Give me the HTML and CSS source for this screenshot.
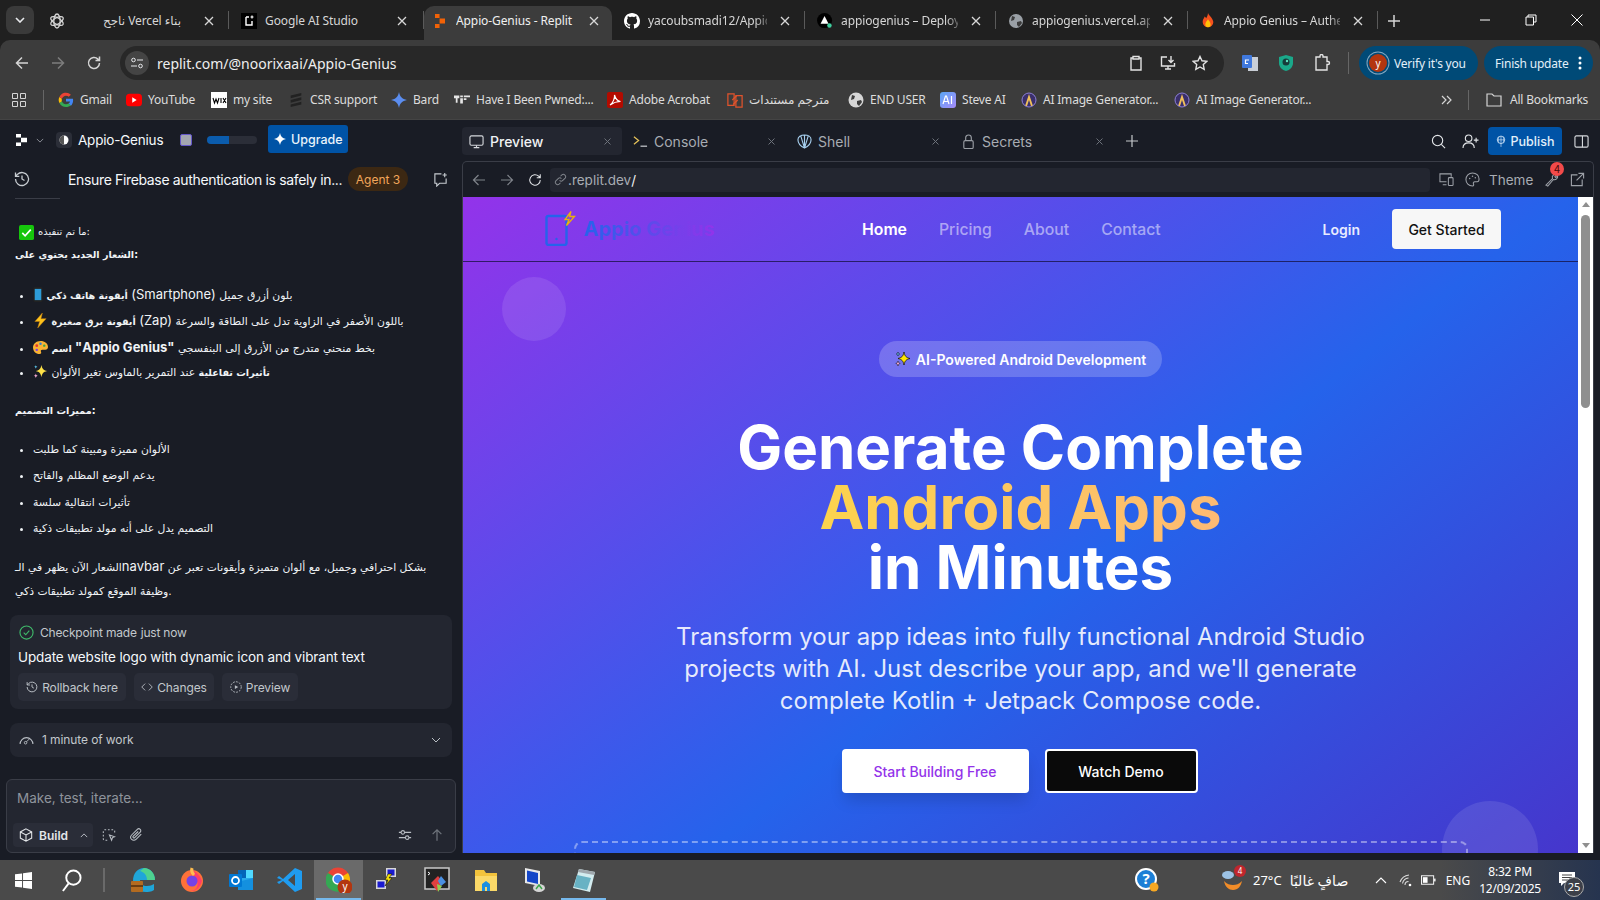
FILE: index.html
```html
<!DOCTYPE html>
<html lang="en">
<head>
<meta charset="utf-8">
<title>Appio-Genius - Replit</title>
<link rel="stylesheet" href="styles.css">
</head>
<body>
<svg class="defs" width="0" height="0" aria-hidden="true">
  <symbol id="x" viewBox="0 0 12 12"><path d="M2 2l8 8M10 2l-8 8" fill="none" stroke="currentColor" stroke-width="1.3"/></symbol>
  <symbol id="globe" viewBox="0 0 16 16"><circle cx="8" cy="8" r="7" fill="#9aa0a6"/><path d="M4 3l3 1-1 3-3 1zM9 9l4-1 1 2-3 4-2-2z" fill="#3c3c3c"/></symbol>
  <symbol id="ailogo" viewBox="0 0 16 16"><circle cx="8" cy="8" r="7" fill="#3a2f6b"/><path d="M8 2L4 14h2l2-6 2 6h2z" fill="#f0c05a"/><circle cx="8" cy="8" r="7" fill="none" stroke="#8c7fd6"/></symbol>
  <symbol id="rp" viewBox="2 1 11 14" preserveAspectRatio="none"><path d="M2 1h5v4H2zM7 5.500h6v5H7zM2 11h5v4H2z" fill="currentColor"/></symbol>
</svg>

<header class="tabstrip">
  <div class="tabcaret"><svg width="10" height="6" viewBox="0 0 10 6"><path d="M1 1l4 4 4-4" fill="none" stroke="#e8eaed" stroke-width="1.6"/></svg></div>
  <div class="tab tab-first">
    <svg class="fav" viewBox="0 0 16 16"><g fill="none" stroke="#d5d5d5" stroke-width="1.300"><ellipse cx="8" cy="8" rx="3.200" ry="7"/><ellipse cx="8" cy="8" rx="3.200" ry="7" transform="rotate(60 8 8)"/><ellipse cx="8" cy="8" rx="3.200" ry="7" transform="rotate(120 8 8)"/></g></svg>
    <span class="tabtitle rtltab">بناء Vercel ناجح</span>
    <svg class="tabx"><use href="#x"/></svg>
  </div>
  <div class="tab">
    <svg class="fav" viewBox="0 0 16 16"><rect width="16" height="16" fill="#000"/><path d="M5 4h3M5 4v8h6V8" fill="none" stroke="#fff" stroke-width="1.400"/><path d="M11 2.500v3M9.500 4h3" stroke="#fff" stroke-width="1.200"/></svg>
    <span class="tabtitle">Google AI Studio</span>
    <svg class="tabx"><use href="#x"/></svg>
  </div>
  <div class="tab tab-active">
    <svg class="fav fav-rp"><use href="#rp"/></svg>
    <span class="tabtitle">Appio-Genius - Replit</span>
    <svg class="tabx"><use href="#x"/></svg>
  </div>
  <div class="tab">
    <svg class="fav" viewBox="0 0 16 16"><path fill="#fff" d="M8 0C3.580 0 0 3.580 0 8c0 3.540 2.290 6.530 5.470 7.590.4.070.55-.17.55-.38 0-.19-.01-.82-.01-1.490-2.010.37-2.530-.49-2.690-.94-.09-.23-.48-.94-.82-1.130-.28-.15-.68-.52-.01-.53.63-.01 1.080.58 1.230.82.72 1.210 1.870.87 2.330.66.070-.52.28-.87.51-1.070-1.780-.2-3.640-.89-3.640-3.950 0-.87.31-1.590.82-2.150-.08-.2-.36-1.020.08-2.120 0 0 .67-.21 2.200.82.64-.18 1.320-.27 2-.27s1.360.09 2 .27c1.530-1.040 2.200-.82 2.200-.82.44 1.100.16 1.920.08 2.120.51.56.82 1.270.82 2.150 0 3.070-1.870 3.750-3.650 3.950.29.25.54.73.54 1.480 0 1.070-.01 1.930-.01 2.200 0 .21.15.46.55.38A8.010 8.010 0 0016 8c0-4.420-3.580-8-8-8z"/></svg>
    <span class="tabtitle tabfade">yacoubsmadi12/Appio</span>
    <svg class="tabx"><use href="#x"/></svg>
  </div>
  <div class="tab">
    <svg class="fav" viewBox="0 0 18 18"><circle cx="8.500" cy="8.500" r="8.500" fill="#000"/><path d="M8.500 3.500l4.500 8.500H4z" fill="#fff"/><circle cx="14" cy="14" r="2.500" fill="#3ecf9e"/></svg>
    <span class="tabtitle tabfade">appiogenius – Deploym</span>
    <svg class="tabx"><use href="#x"/></svg>
  </div>
  <div class="tab">
    <svg class="fav"><use href="#globe"/></svg>
    <span class="tabtitle tabfade">appiogenius.vercel.app</span>
    <svg class="tabx"><use href="#x"/></svg>
  </div>
  <div class="tab">
    <svg class="fav" viewBox="0 0 14 18"><path d="M7 0c1 3 5 5 6 10a6 6 0 01-12 0c0-3 2-4 2-6 1 1 2 1 2 2 1-2 2-4 2-6z" fill="#f4511e"/><path d="M7 7c1 2 3 3 3 6a3 3 0 01-6 0c0-3 2-4 3-6z" fill="#ffc107"/></svg>
    <span class="tabtitle tabfade">Appio Genius – Authen</span>
    <svg class="tabx"><use href="#x"/></svg>
  </div>
  <div class="tabplus"><svg width="12" height="12" viewBox="0 0 12 12"><path d="M6 0v12M0 6h12" stroke="#d5d5d5" stroke-width="1.500"/></svg></div>
  <div class="winctl">
    <svg width="12" height="12" viewBox="0 0 12 12"><path d="M1 6h10" stroke="#fff"/></svg>
    <svg width="12" height="12" viewBox="0 0 12 12"><path d="M3 3V1h8v7H8.500M1 3h7.500v8H1z" fill="none" stroke="#fff"/></svg>
    <svg width="12" height="12" viewBox="0 0 12 12"><path d="M.5.500l11 11M11.500.500l-11 11" stroke="#fff"/></svg>
  </div>
</header>

<nav class="toolbar">
  <svg class="tbicon" viewBox="0 0 16 16"><path d="M14 8H2.500M8 2.500L2.500 8 8 13.500" fill="none" stroke="#d5d5d5" stroke-width="1.500"/></svg>
  <svg class="tbicon" viewBox="0 0 16 16"><path d="M2 8h11.500M8 2.500L13.500 8 8 13.500" fill="none" stroke="#7d7d7d" stroke-width="1.500"/></svg>
  <svg class="tbicon" viewBox="0 0 16 16"><path d="M13.500 8a5.500 5.500 0 11-1.600-3.900L13.500 5.500M13.500 1.500v4h-4" fill="none" stroke="#d5d5d5" stroke-width="1.500"/></svg>
  <div class="omnibox">
    <div class="tunechip"><svg width="12" height="12" viewBox="0 0 12 12"><circle cx="2.500" cy="3" r="1.800" fill="none" stroke="#e8eaed"/><path d="M6 3h6M0 9h6" stroke="#e8eaed"/><circle cx="9.500" cy="9" r="1.800" fill="none" stroke="#e8eaed"/></svg></div>
    <span class="url">replit.com/@noorixaai/Appio-Genius</span>
    <svg class="omniicon" viewBox="0 0 16 16"><path d="M4.500 3H3v12h10V3h-1.500M5 1.500h6V4H5z" fill="none" stroke="#e3e3e3" stroke-width="1.400"/></svg>
    <svg class="omniicon" viewBox="0 0 16 16"><path d="M7 2H1.500v9h13V8M5 14h6M8 11v3M11 1v6M8.500 5l2.500 2.500L13.500 5" fill="none" stroke="#e3e3e3" stroke-width="1.400"/></svg>
    <svg class="omniicon" viewBox="0 0 16 16"><path d="M8 1.500l2 4.300 4.700.6-3.400 3.200.9 4.700L8 12l-4.200 2.300.9-4.700L1.300 6.400 6 5.800z" fill="none" stroke="#e3e3e3" stroke-width="1.400"/></svg>
  </div>
  <svg class="exticon ext-translate" viewBox="0 0 18 18"><rect x="7" y="3" width="10" height="14" fill="#c9ced6"/><rect x="1" y="1" width="10" height="13" rx="1" fill="#3f78dd"/><path d="M8 6H4.500v3.500H7" fill="none" stroke="#fff" stroke-width="1.200"/></svg>
  <svg class="exticon" viewBox="0 0 18 18"><path d="M9 1l7 2v6c0 4-3 7-7 8-4-1-7-4-7-8V3z" fill="#1aa88a"/><circle cx="9" cy="8" r="3.500" fill="#173a3a"/><circle cx="10" cy="7" r="1.200" fill="#5fe0c0"/></svg>
  <svg class="exticon" viewBox="0 0 18 18"><path d="M3 3h4v-1a1.500 1.500 0 013 0v1h4v4.500h1a1.500 1.500 0 010 3h-1V16H3z" fill="none" stroke="#e3e3e3" stroke-width="1.400"/></svg>
  <span class="tbsep"></span>
  <div class="pill pill-verify"><span class="avatar">y</span><span>Verify it's you</span></div>
  <div class="pill pill-update"><span>Finish update</span><svg width="4" height="14" viewBox="0 0 4 14"><circle cx="2" cy="2" r="1.500" fill="#fff"/><circle cx="2" cy="7" r="1.500" fill="#fff"/><circle cx="2" cy="12" r="1.500" fill="#fff"/></svg></div>
</nav>

<nav class="bookmarks">
  <svg class="bmicon" viewBox="0 0 14 14"><path d="M.5.500h5v5h-5zM8.500.500h5v5h-5zM.5 8.500h5v5h-5zM8.500 8.500h5v5h-5z" fill="none" stroke="#d5d5d5"/></svg>
  <span class="bmsep"></span>
  <div class="bm"><svg class="bmfav" viewBox="0 0 18 18"><path d="M17 9.200c0-.6 0-1.200-.2-1.700H9v3.300h4.500a3.800 3.800 0 01-1.700 2.500l2.700 2.100c1.600-1.500 2.500-3.600 2.500-6.200z" fill="#4285f4"/><path d="M9 17c2.200 0 4-.7 5.500-2l-2.700-2.100c-.7.500-1.700.8-2.800.8-2.100 0-3.900-1.400-4.600-3.400L1.600 12.500C3 15.200 5.800 17 9 17z" fill="#34a853"/><path d="M4.400 10.300a5 5 0 010-2.600L1.600 5.500a8 8 0 000 7z" fill="#fbbc05"/><path d="M9 4.200c1.200 0 2.300.4 3.100 1.200l2.400-2.400A8 8 0 001.600 5.500l2.800 2.200C5.100 5.700 6.900 4.200 9 4.200z" fill="#ea4335"/></svg><span>Gmail</span></div>
  <div class="bm"><svg class="bmfav" viewBox="0 0 18 14"><rect width="18" height="14" rx="4" fill="#f00"/><path d="M7 4l5 3-5 3z" fill="#fff"/></svg><span>YouTube</span></div>
  <div class="bm"><svg class="bmfav" viewBox="0 0 16 16"><rect width="16" height="16" fill="#fff"/><path d="M2 6l1.500 5L5 7l1.500 4L8 6M10 6v5M12 6l3 5M15 6l-3 5" fill="none" stroke="#000" stroke-width="1.100"/></svg><span>my site</span></div>
  <div class="bm"><svg class="bmfav" viewBox="0 0 16 18"><path d="M2 4l12-3v3L2 7zM2 9l12-3v3L2 12zM2 14l12-3v3L2 17z" fill="#222"/></svg><span>CSR support</span></div>
  <div class="bm"><svg class="bmfav" viewBox="0 0 16 16"><path d="M8 0c.8 4.500 3 7 8 8-5 1-7.200 3.500-8 8-.8-4.500-3-7-8-8 5-1 7.200-3.500 8-8z" fill="#5b8def"/></svg><span>Bard</span></div>
  <div class="bm"><svg class="bmfav" viewBox="0 0 18 14"><path d="M0 2h6v3H4v5H2V5H0zM7 2h3v2H7zM11 2h7v2h-7zM7 5h3v6H7zM11 5h3v2h-3z" fill="#e5e5e5"/></svg><span>Have I Been Pwned:...</span></div>
  <div class="bm"><svg class="bmfav" viewBox="0 0 16 16"><rect width="16" height="16" rx="2" fill="#b30b00"/><path d="M3 13c3-2 5-7 4.500-10 1 4 3 6 6 6.500-3 0-7 1-10.500 3.500z" fill="none" stroke="#fff" stroke-width="1.200"/></svg><span>Adobe Acrobat</span></div>
  <div class="bm"><svg class="bmfav" viewBox="0 0 18 18"><path d="M1 2h7v13H1zM10 4h7v13h-7z" fill="none" stroke="#e0532c" stroke-width="1.400"/><path d="M6 9l5-5M7 14l5-5" stroke="#e0532c" stroke-width="1.400"/></svg><span class="arabicbm">مترجم مستندات</span></div>
  <div class="bm"><svg class="bmfav bmfav-globe" viewBox="0 0 16 16"><circle cx="8" cy="8" r="7.500" fill="#d5d5d5"/><path d="M4 3l3 1-1 3-3 1zM9 9l4-1 1 2-3 4-2-2z" fill="#3c3c3c"/></svg><span>END USER</span></div>
  <div class="bm"><svg class="bmfav" viewBox="0 0 16 16"><defs><linearGradient id="stv" x1="0" y1="0" x2="1" y2="1"><stop offset="0" stop-color="#5aa5f5"/><stop offset="1" stop-color="#a78bfa"/></linearGradient></defs><rect width="16" height="16" rx="3" fill="url(#stv)"/><path d="M3 12l2.500-8h1L9 12M4 9.500h4M11.500 4v8" fill="none" stroke="#fff" stroke-width="1.200"/></svg><span>Steve AI</span></div>
  <div class="bm"><svg class="bmfav"><use href="#ailogo"/></svg><span>AI Image Generator...</span></div>
  <div class="bm"><svg class="bmfav"><use href="#ailogo"/></svg><span>AI Image Generator...</span></div>
  <svg class="bmicon bm-more" viewBox="0 0 12 12"><path d="M2 2l4 4-4 4M7 2l4 4-4 4" fill="none" stroke="#d5d5d5" stroke-width="1.200"/></svg>
  <span class="bmsep"></span>
  <div class="bm bm-all"><svg class="bmfav" viewBox="0 0 16 14"><path d="M1 1h5l2 2h7v10H1z" fill="none" stroke="#d5d5d5" stroke-width="1.200"/></svg><span>All Bookmarks</span></div>
</nav>

<main class="workspace">
  <aside class="left">
    <div class="lhead">
      <svg class="rp-mark"><use href="#rp"/></svg>
      <svg class="chev" viewBox="0 0 10 6"><path d="M1 1l4 4 4-4" fill="none" stroke="#8b8f98" stroke-width="1.200"/></svg>
      <span class="projicon"><svg width="10" height="10" viewBox="0 0 10 10"><circle cx="5" cy="5" r="4.500" fill="#fff"/><path d="M5 .5a4.500 4.500 0 000 9z" fill="#555"/></svg></span>
      <span class="projname">Appio-Genius</span>
      <span class="stopbox"></span>
      <span class="progress"><span class="progress-fill"></span></span>
      <button class="upgrade"><svg width="12" height="12" viewBox="0 0 16 16"><path d="M8 0c.8 4.500 3 7 8 8-5 1-7.200 3.500-8 8-.8-4.500-3-7-8-8 5-1 7.200-3.500 8-8z" fill="#fff"/></svg>Upgrade</button>
    </div>
    <div class="lsub">
      <svg class="lsub-hist" viewBox="0 0 16 16"><path d="M1.500 8a6.500 6.500 0 101.900-4.600L1.500 5.300M1.500 1.500v3.800h3.800M8 4.500V8l2.500 1.500" fill="none" stroke="#c7ccd1" stroke-width="1.300"/></svg>
      <span class="lsub-title">Ensure Firebase authentication is safely in...</span>
      <span class="agent">Agent 3</span>
      <svg class="lsub-new" viewBox="0 0 16 16"><path d="M9 2H2v10h2v3l3-3h7V7M12.500 1v4.500M10.200 3.200h4.500" fill="none" stroke="#c7ccd1" stroke-width="1.200"/></svg>
    </div>
    <div class="messages">
      <div class="scrollfade"></div>
      <p class="msg msg-small"><svg class="emoji" viewBox="0 0 16 16"><rect width="16" height="16" rx="2" fill="#16c60c"/><path d="M3.500 8.500l3 3 6-6.500" fill="none" stroke="#fff" stroke-width="1.800"/></svg> ما تم تنفيذه:</p>
      <p class="msg msg-second"><b>الشعار الجديد يحتوي على:</b></p>
      <ul class="list">
        <li><svg class="emoji emoji-phone" viewBox="3 0 10 16"><rect x="3" width="10" height="16" rx="1.500" fill="#222"/><rect x="4.500" y="2" width="7" height="12" fill="#2d9bd8"/></svg> <b>أيقونة هاتف ذكي</b> <span class="en">(Smartphone)</span> بلون أزرق جميل</li>
        <li><svg class="emoji" viewBox="0 0 16 16"><path d="M10 0L2 9h5l-2 7 9-10H8.500z" fill="#fcc21b" stroke="#c77c10" stroke-width=".5"/></svg> <b>أيقونة برق صغيرة</b> <span class="en">(Zap)</span> باللون الأصفر في الزاوية تدل على الطاقة والسرعة</li>
        <li><svg class="emoji" viewBox="0 0 16 16"><path d="M8 1C3.500 1 0 4 0 8s3 7 7 7c2 0 2-1.500 1.500-2.500s0-2 1.500-2h3c2 0 3-1.500 3-3C16 3.500 12.500 1 8 1z" fill="#f9b233"/><circle cx="4" cy="6" r="1.500" fill="#e5392d"/><circle cx="8" cy="4" r="1.300" fill="#2d7ddb"/><circle cx="12" cy="6" r="1.300" fill="#3aa648"/><circle cx="4" cy="10.500" r="1.300" fill="#7c3aed"/></svg> <b>اسم <span class="en">"Appio Genius"</span></b> بخط منحني متدرج من الأزرق إلى البنفسجي</li>
        <li><svg class="emoji" viewBox="0 0 16 16"><path d="M9 1c.8 4 2 5.500 6 6.500-4 1-5.200 2.500-6 6.500-.8-4-2-5.500-6-6.500 4-1 5.200-2.500 6-6.500z" fill="#fde047"/><path d="M3 10c.3 1.500.8 2 2.200 2.400C3.800 12.800 3.300 13.500 3 15c-.3-1.500-.8-2.200-2.200-2.600C2.200 12 2.700 11.500 3 10z" fill="#f0a8d0"/><path d="M3 1c.2 1.200.6 1.600 1.800 2C3.600 3.400 3.200 3.800 3 5c-.2-1.200-.6-1.600-1.800-2C2.400 2.600 2.800 2.200 3 1z" fill="#5cc4e8"/></svg> <b>تأثيرات تفاعلية</b> عند التمرير بالماوس تغير الألوان</li>
      </ul>
      <p class="msg msg-head"><b>مميزات التصميم:</b></p>
      <ul class="list list-second">
        <li>الألوان مميزة ومبينة كما طلبت</li>
        <li>يدعم الوضع المظلم والفاتح</li>
        <li>تأثيرات انتقالية سلسة</li>
        <li>التصميم يدل على أنه مولد تطبيقات ذكية</li>
      </ul>
      <p class="msg msg-para">الشعار الآن يظهر في الـ<span class="en">navbar</span> بشكل احترافي وجميل، مع ألوان متميزة وأيقونات تعبر عن وظيفة الموقع كمولد تطبيقات ذكي.</p>
    </div>
    <section class="card checkpoint">
      <div class="cp-top"><svg class="cp-check" viewBox="0 0 16 16"><circle cx="8" cy="8" r="7" fill="none" stroke="#3fb96a" stroke-width="1.200"/><path d="M5 8.200l2.200 2.200L11 6" fill="none" stroke="#3fb96a" stroke-width="1.200"/></svg><span>Checkpoint made</span><span class="cp-now">just now</span></div>
      <div class="cp-title">Update website logo with dynamic icon and vibrant text</div>
      <div class="cp-actions">
        <button class="cp-btn cp-roll"><svg viewBox="0 0 16 16"><path d="M1.500 8a6.500 6.500 0 101.900-4.600L1.500 5.300M1.500 1.500v3.800h3.800M8 4.500V8l2.500 1.500" fill="none" stroke="#b9bec4" stroke-width="1.300"/></svg>Rollback here</button>
        <button class="cp-btn cp-chg"><svg viewBox="0 0 16 16"><path d="M5.500 3.500L1 8l4.500 4.500M10.500 3.500L15 8l-4.500 4.500" fill="none" stroke="#b9bec4" stroke-width="1.200"/></svg>Changes</button>
        <button class="cp-btn cp-prev"><svg viewBox="0 0 16 16"><circle cx="8" cy="8" r="7" fill="none" stroke="#b9bec4" stroke-width="1.200" stroke-dasharray="2.500 1.500"/><path d="M6.500 5.500L11 8l-4.500 2.500z" fill="#b9bec4"/></svg>Preview</button>
      </div>
    </section>
    <section class="card work">
      <svg class="work-gauge" viewBox="0 0 16 12"><path d="M1 11a7 7 0 0114 0" fill="none" stroke="#b9bec4" stroke-width="1.200"/><circle cx="7" cy="9.500" r="1.400" fill="none" stroke="#b9bec4"/><path d="M8 8.500l3-3" stroke="#b9bec4"/></svg>
      <span class="work-text">1 minute of work</span>
      <svg class="work-chev" viewBox="0 0 10 6"><path d="M1 1l4 4 4-4" fill="none" stroke="#b9bec4" stroke-width="1"/></svg>
    </section>
    <section class="composer">
      <div class="placeholder">Make, test, iterate...</div>
      <div class="comp-row">
        <div class="build"><svg viewBox="0 0 16 16"><path d="M8 1l6.500 3.500v7L8 15l-6.500-3.500v-7zM1.500 4.500L8 8l6.500-3.500M8 8v7" fill="none" stroke="#e3e6e9" stroke-width="1.200"/></svg><span>Build</span><svg class="build-chev" viewBox="0 0 10 6"><path d="M1 5l4-4 4 4" fill="none" stroke="#b9bec4" stroke-width="1.200"/></svg></div>
        <svg class="comp-icon comp-select" viewBox="0 0 16 16"><path d="M6 14H3a1.500 1.500 0 01-1.500-1.500v-9A1.500 1.500 0 013 2h10a1.500 1.500 0 011.500 1.500V7" fill="none" stroke="#b9bec4" stroke-width="1.200" stroke-dasharray="2 2"/><path d="M8.500 8l6 2-2.500 1-1 3z" fill="none" stroke="#b9bec4" stroke-width="1.200"/></svg>
        <svg class="comp-icon comp-clip" viewBox="0 0 16 16"><path d="M14 7l-6 6a3.500 3.500 0 01-5-5l6.500-6.500a2.300 2.300 0 013.300 3.300L6.500 11a1.100 1.100 0 01-1.600-1.600L10.500 4" fill="none" stroke="#b9bec4" stroke-width="1.200"/></svg>
        <svg class="comp-icon comp-sliders" viewBox="0 0 16 16"><path d="M1 5h2.500M8 5h7M1 11h7M12.500 11H15" stroke="#b9bec4" stroke-width="1.200"/><circle cx="5.500" cy="5" r="2" fill="none" stroke="#b9bec4" stroke-width="1.200"/><circle cx="10.500" cy="11" r="2" fill="none" stroke="#b9bec4" stroke-width="1.200"/></svg>
        <svg class="comp-icon comp-send" viewBox="0 0 16 16"><path d="M8 14.500V2M3 7l5-5 5 5" fill="none" stroke="#6f747c" stroke-width="1.400"/></svg>
      </div>
    </section>
  </aside>

  <section class="right">
    <div class="rtabs">
      <div class="rtab rtab-active"><svg viewBox="0 0 16 16"><rect x="1" y="2" width="14" height="10" rx="1.500" fill="none" stroke="#d5d8dc" stroke-width="1.200"/><path d="M5 14.500h6M8 12v2.500" stroke="#d5d8dc" stroke-width="1.200"/></svg><span>Preview</span><svg class="rtabx"><use href="#x"/></svg></div>
      <div class="rtab"><svg viewBox="0 0 16 16"><path d="M1 3l5 4-5 4" fill="none" stroke="#e6c35a" stroke-width="1.300"/><path d="M8 13h7" stroke="#c9ccd1" stroke-width="1.300"/></svg><span>Console</span><svg class="rtabx"><use href="#x"/></svg></div>
      <div class="rtab"><svg viewBox="0 0 16 16"><path d="M8 15C4 13 1 10 1 6c0-3 3-5 7-5s7 2 7 5c0 4-3 7-7 9zM8 15V1M8 15L4 2M8 15l4-13" fill="none" stroke="#a7cfee" stroke-width="1.200"/></svg><span>Shell</span><svg class="rtabx"><use href="#x"/></svg></div>
      <div class="rtab"><svg viewBox="0 0 16 16"><rect x="3" y="7" width="10" height="8.500" rx="1.500" fill="none" stroke="#9a9ea5" stroke-width="1.200"/><path d="M5 7V4a3 3 0 016 0v3" fill="none" stroke="#9a9ea5" stroke-width="1.200"/></svg><span>Secrets</span><svg class="rtabx"><use href="#x"/></svg></div>
      <svg class="rplus" viewBox="0 0 12 12"><path d="M6 0v12M0 6h12" stroke="#c5c8cc" stroke-width="1.200"/></svg>
      <svg class="ricon r-search" viewBox="0 0 16 16"><circle cx="7" cy="7" r="5.500" fill="none" stroke="#e3e6e9" stroke-width="1.200"/><path d="M11 11l4 4" stroke="#e3e6e9" stroke-width="1.200"/></svg>
      <svg class="ricon r-add" viewBox="0 0 18 16"><circle cx="7" cy="4.500" r="3.500" fill="none" stroke="#e3e6e9" stroke-width="1.200"/><path d="M1 15c0-3.500 2.500-5.500 6-5.500s6 2 6 5.500M15 4v5M12.500 6.500h5" fill="none" stroke="#e3e6e9" stroke-width="1.200"/></svg>
      <button class="publish"><svg viewBox="0 0 12 14"><circle cx="6" cy="5" r="4.500" fill="none" stroke="#cfe3f7"/><path d="M6 .5v13M1.500 5h9M3.500 1.500c-1 2-1 5 0 7M8.500 1.500c1 2 1 5 0 7" fill="none" stroke="#cfe3f7" stroke-width=".8"/></svg>Publish</button>
      <svg class="ricon r-split" viewBox="0 0 16 16"><rect x="1" y="2" width="14" height="12" rx="1.500" fill="none" stroke="#d5d8dc" stroke-width="1.200"/><path d="M9 2v12" stroke="#d5d8dc" stroke-width="1.200"/></svg>
    </div>
    <div class="frame">
      <div class="framebar">
        <svg class="fb-icon" viewBox="0 0 14 14"><path d="M13 7H1.500M6.500 2L1.500 7l5 5" fill="none" stroke="#7f838a" stroke-width="1.200"/></svg>
        <svg class="fb-icon" viewBox="0 0 14 14"><path d="M1 7h11.500M7.500 2l5 5-5 5" fill="none" stroke="#7f838a" stroke-width="1.200"/></svg>
        <svg class="fb-icon" viewBox="0 0 16 16"><path d="M14 8a6 6 0 11-1.800-4.300L14 5.500M14 1.500v4h-4" fill="none" stroke="#e3e6e9" stroke-width="1.200"/></svg>
        <div class="fb-url"><svg viewBox="0 0 14 14"><path d="M6 8a2.500 2.500 0 003.500 0l2.500-2.500A2.500 2.500 0 008.500 2L7 3.500M8 6a2.500 2.500 0 00-3.500 0L2 8.500A2.500 2.500 0 005.500 12L7 10.500" fill="none" stroke="#7f838a" stroke-width="1.100"/></svg><span class="fb-host">.replit.dev</span><span>/</span></div>
        <svg class="fb-tool fb-devices" viewBox="0 0 16 16"><path d="M8 10.500H1V2h12v3M4 13.500h4" fill="none" stroke="#9da1a8" stroke-width="1.100"/><rect x="10" y="6" width="5" height="8.500" rx="1" fill="none" stroke="#9da1a8" stroke-width="1.100"/></svg>
        <svg class="fb-tool fb-palette" viewBox="0 0 16 16"><path d="M8 1C4 1 1 4 1 8s3 7 7 7c1.500 0 1.500-1.500 1-2.500s0-2 1.500-2H13c1.500 0 2-1.500 2-3C15 3.500 12 1 8 1z" fill="none" stroke="#9da1a8" stroke-width="1.100"/><circle cx="5" cy="7" r=".8" fill="#9da1a8"/><circle cx="8" cy="4.500" r=".8" fill="#9da1a8"/><circle cx="11" cy="6" r=".8" fill="#9da1a8"/></svg>
        <span class="fb-theme">Theme</span>
        <span class="fb-wrench"><svg viewBox="0 0 16 16"><path d="M1 14l7-7a3.500 3.500 0 014.500-4.500L10.500 5l1 1 2-2A3.500 3.500 0 019 8l-6 7z" fill="none" stroke="#9da1a8" stroke-width="1.100"/></svg><span class="fb-badge">4</span></span>
        <svg class="fb-tool fb-open" viewBox="0 0 16 16"><path d="M8 3H1.500v11.500H13V8M9 1.500h5.500V7M14.500 1.500L7 9" fill="none" stroke="#9da1a8" stroke-width="1.200"/></svg>
      </div>
      <div class="viewport">
        <div class="page">
          <span class="blob blob-a"></span>
          <span class="blob blob-b"></span>
          <div class="sitenav">
            <div class="sitelogo">
              <svg class="logoicon" viewBox="0 0 32 36"><rect x="1.500" y="6" width="20" height="29" rx="2" fill="none" stroke="#2563eb" stroke-width="2.400"/><circle cx="11.500" cy="29" r="1.200" fill="#2563eb"/><path d="M26 1.500l-6 8h4l-2.500 6 8-9h-5z" fill="none" stroke="#eab308" stroke-width="1.300"/></svg>
              <span class="logotext">Appio Genius</span>
            </div>
            <div class="sitelinks">
              <a class="link-on">Home</a><a>Pricing</a><a>About</a><a>Contact</a>
            </div>
            <div class="siteauth"><a class="login">Login</a><button class="getstarted">Get Started</button></div>
          </div>
          <div class="hero">
            <div class="badge"><svg class="badge-star" viewBox="0 0 16 16"><path d="M9 1c.8 4 2 5.500 6 6.500-4 1-5.200 2.500-6 6.500-.8-4-2-5.500-6-6.500 4-1 5.200-2.500 6-6.500z" fill="#ffe600" stroke="#111" stroke-width=".8"/><path d="M3 10c.3 1.500.8 2 2.200 2.400C3.800 12.800 3.300 13.500 3 15c-.3-1.500-.8-2.200-2.200-2.600C2.200 12 2.700 11.500 3 10z" fill="#f0a8d0" stroke="#111" stroke-width=".5"/><path d="M3 1c.2 1.200.6 1.600 1.800 2C3.600 3.400 3.200 3.800 3 5c-.2-1.200-.6-1.600-1.800-2C2.400 2.600 2.800 2.200 3 1z" fill="#5cc4e8" stroke="#111" stroke-width=".5"/></svg><span>AI-Powered Android Development</span></div>
            <h1 class="headline"><span class="hl-line">Generate Complete</span><span class="hl-line headline-accent">Android Apps</span><span class="hl-line">in Minutes</span></h1>
            <p class="subtitle">Transform your app ideas into fully functional Android Studio projects with AI. Just describe your app, and we'll generate complete Kotlin + Jetpack Compose code.</p>
            <div class="cta"><button class="cta-start">Start Building Free</button><button class="cta-demo">Watch Demo</button></div>
            <div class="dashed"></div>
          </div>
        </div>
        <div class="scrollbar"><span class="sb-up"></span><span class="sb-thumb"></span><span class="sb-down"></span></div>
      </div>
    </div>
  </section>
</main>

<footer class="taskbar">
  <svg class="tk-win" viewBox="0 0 18 18"><path d="M0 2.500l7.500-1v7H0zM8.500 1.300L18 0v8.500H8.500zM0 9.500h7.500v7l-7.500-1zM8.500 9.500H18V18l-9.500-1.300z" fill="#fff"/></svg>
  <svg class="tk-search" viewBox="0 0 22 24"><circle cx="13" cy="9" r="7.500" fill="none" stroke="#fff" stroke-width="2"/><path d="M8 15l-6 8" stroke="#fff" stroke-width="2"/></svg>
  <span class="tk-sep"></span>
  <div class="tk-apps">
    <span class="tk-app"><svg viewBox="0 0 26 26"><path d="M3 14C3 6 8 1 14 1c6 0 11 5 11 12H10c0 4 3 6 7 6 3 0 5-1 7-2v6c-3 2-6 2-8 2C8 25 3 21 3 14z" fill="#1fa6d9"/><path d="M14 1c6 0 11 5 11 12h-8C17 8 14 5 10 4z" fill="#4ed28f"/><rect x="1" y="14" width="12" height="11" rx="1" fill="#b36b20"/><rect x="1" y="18" width="12" height="2" fill="#6b3d10"/></svg></span>
    <span class="tk-app"><svg viewBox="0 0 26 26"><circle cx="13" cy="14" r="11" fill="#ff7139"/><path d="M13 3c4 2 8 5 10 11-2 7-7 11-12 10 6 0 9-5 7-10z" fill="#ff3d6b"/><circle cx="13" cy="14" r="5.500" fill="#7542e5"/><path d="M13 1c-1 3 0 5 2 7" fill="none" stroke="#ffbd4f" stroke-width="3"/></svg></span>
    <span class="tk-app"><svg viewBox="0 0 26 26"><path d="M10 3h15v18H10z" fill="#28a8ea"/><path d="M10 3h8v8h-8z" fill="#0364b8"/><path d="M18 3h7v8h-7z" fill="#50d9ff"/><path d="M10 15l15-4v12H10z" fill="#1490df"/><rect x="1" y="7" width="13" height="13" rx="1" fill="#0078d4"/><circle cx="7.500" cy="13.500" r="3.500" fill="none" stroke="#fff" stroke-width="1.800"/></svg></span>
    <span class="tk-app"><svg viewBox="0 0 26 26"><path d="M18 1l7 3v18l-7 3L6 14 2 17 0 15l5-2-5-2 2-2 4 3zM18 7l-7 6 7 6z" fill="#1f9cf0"/></svg></span>
    <span class="tk-app tk-active"><svg viewBox="0 0 26 26"><circle cx="12" cy="12" r="11.500" fill="#ea4335"/><path d="M12 12L22 6a11.500 11.500 0 01-5 17z" fill="#fbbc05"/><path d="M12 12l5 11A11.500 11.500 0 012 6z" fill="#34a853"/><circle cx="12" cy="12" r="5" fill="#4285f4" stroke="#fff" stroke-width="1.500"/><circle cx="19" cy="20" r="7.500" fill="#b3360f"/><text x="19" y="23" class="tk-y">y</text></svg></span>
    <span class="tk-app"><svg viewBox="0 0 26 26"><rect x="11" y="1" width="10" height="9" fill="#d8d8d8"/><rect x="12.500" y="2.500" width="7" height="6" fill="#1a1ad0"/><rect x="1" y="13" width="10" height="9" fill="#d8d8d8"/><rect x="2.500" y="14.500" width="7" height="6" fill="#1a1ad0"/><path d="M13 7l-3 6h3l-3 6 7-8h-3l3-4z" fill="#f5e10a" stroke="#111" stroke-width=".6"/></svg></span>
    <span class="tk-app"><svg viewBox="0 0 26 26"><rect x="1" y="1" width="24" height="21" fill="#222" stroke="#c9c9c9" stroke-width="1.500"/><path d="M4 5l2 1.500L4 8" fill="none" stroke="#fff"/><path d="M14 9l5 6-6 9-6-8z" fill="#e04040"/><path d="M17 9l5 6-5 4-3-5z" fill="#4a90e2"/><path d="M13 17l5 2-4 6z" fill="#8fd14f"/></svg></span>
    <span class="tk-app"><svg viewBox="0 0 26 26"><path d="M2 3h9l2 3h11v18H2z" fill="#f3c33c"/><path d="M2 9h22v15H2z" fill="#fbd968"/><path d="M9 24v-7l4-3 4 3v7h-3v-4h-2v4z" fill="#1d8fe0"/></svg></span>
    <span class="tk-app"><svg viewBox="0 0 26 26"><path d="M3 1l15 3v15l-15-3z" fill="#e9e9e9"/><path d="M5 3.500l11 2.500v11l-11-2.500z" fill="#1446c8"/><ellipse cx="17" cy="21" rx="6" ry="4" fill="#d5d5d5"/><path d="M14 22l3-4 3 4" fill="none" stroke="#3aa648" stroke-width="1.400"/></svg></span>
    <span class="tk-app tk-note"><svg viewBox="0 0 26 26"><path d="M8 2l16 3-5 20L2 21z" fill="#d3ecef"/><path d="M8 2l16 3-1 3L7 5z" fill="#a0a8ae"/><path d="M6 8l14 3-4 12L3 20z" fill="#68b2c4"/></svg></span>
  </div>
  <div class="tk-tray">
    <svg class="tk-help" viewBox="0 0 24 24"><circle cx="11" cy="11" r="10" fill="#1c7fd6" stroke="#fff" stroke-width="2"/><text x="11" y="16" class="tk-q">?</text><circle cx="19" cy="19" r="4.500" fill="#f7a823"/></svg>
    <span class="tk-weather"><svg viewBox="0 0 24 24"><path d="M3 13c1 6 5 9 9 9 5 0 8-4 9-9-3 3-6 4-9 4s-6-1-9-4z" fill="#f28c28"/><ellipse cx="7" cy="7" rx="6" ry="4" fill="#9dc3e6"/></svg><span class="tk-wbadge">4</span></span>
    <span class="tk-temp">27°C</span>
    <span class="tk-cond">صافٍ غالبًا</span>
    <svg class="tk-chev" viewBox="0 0 12 7"><path d="M1 6l5-5 5 5" fill="none" stroke="#fff" stroke-width="1.100"/></svg>
    <svg class="tk-wifi" viewBox="0 0 14 14"><path d="M1 9a11 11 0 019-7M3.500 10.500a7 7 0 016-5.500M6 12a3.500 3.500 0 013.500-3.500" fill="none" stroke="#ddd" stroke-width="1.100"/><circle cx="11" cy="12" r="1.300" fill="#fff"/></svg>
    <svg class="tk-batt" viewBox="0 0 16 10"><rect x=".5" y=".5" width="13" height="9" fill="none" stroke="#fff"/><rect x="2" y="2" width="5" height="6" fill="#fff"/><rect x="14" y="3.500" width="1.500" height="3" fill="#fff"/></svg>
    <span class="tk-eng">ENG</span>
    <div class="tk-clock"><span>8:32 PM</span><span>12/09/2025</span></div>
    <span class="tk-notif"><svg viewBox="0 0 16 14"><path d="M0 0h16v11H5l-3 3v-3H0z" fill="#fff"/><path d="M3 3h10M3 5.500h10M3 8h7" stroke="#444"/></svg><span class="tk-count">25</span></span>
  </div>
</footer>
</body>
</html>
```
FILE: styles.css
```css
* { box-sizing: border-box; }
html, body { margin: 0; padding: 0; }
body {
  width: 1600px; height: 900px; overflow: hidden;
  display: flex; flex-direction: column;
  background: #202020; color: #f5f9fc;
  font-family: "Noto Sans", "DejaVu Sans", sans-serif;
}
button { font: inherit; border: 0; padding: 0; }
.defs { position: absolute; }
p, ul, h1 { margin: 0; padding: 0; }
svg { display: block; flex: none; }

/* Chrome tab strip */
.tabstrip {
  height: 40px; background: #202020; flex: none;
  display: grid; align-items: end;
  grid-template-columns: 40px 189px 195px 188px 193px 191px 192px 190px 32px 1fr;
}
.tabcaret {
  width: 28px; height: 28px; margin: 0 0 6px 6px; border-radius: 8px; background: #3a3a3a;
  display: flex; align-items: center; justify-content: center;
}
.tab {
  height: 34px; display: flex; align-items: center; position: relative;
  padding: 0 14px 5px 12px; font-size: 12px; letter-spacing: -.1px; color: #d6d6d6;
}
.tab::after { content: ""; position: absolute; right: 0; top: 5px; height: 18px; width: 1px; background: #5a5a5a; }
.tab:nth-child(3) { padding-right: 16px; }
.tab-first { padding-left: 9px; }
.tab-active { background: #3c3c3c; border-radius: 10px 10px 0 0; color: #f0f0f0; padding-left: 11px; padding-right: 12px; }
.tab-active::after { display: none; }
.fav { width: 16px; height: 16px; margin-right: 8px; }
.fav-rp { color: #f26207; width: 10px; height: 14px; margin-right: 11px; }
.tabtitle { flex: 1; min-width: 0; overflow: hidden; white-space: nowrap; }
.rtltab { direction: rtl; text-align: right; padding-right: 10px; font-size: 12px; }
.tabfade { -webkit-mask-image: linear-gradient(90deg, #000 90%, rgba(0,0,0,.35)); mask-image: linear-gradient(90deg, #000 90%, rgba(0,0,0,.35)); }
.tabx { width: 12px; height: 12px; margin-left: 12px; color: #d8d8d8; }
.tabplus { height: 34px; display: flex; align-items: center; padding: 0 0 5px 10px; }
.winctl { height: 40px; display: flex; align-items: center; justify-content: flex-end; gap: 34px; padding-right: 17px; }

/* Chrome toolbar */
.toolbar {
  height: 44px; background: #3c3c3c; flex: none; border-radius: 10px 10px 0 0;
  display: flex; align-items: center; padding: 2px 7px 0 14px;
}
.tbicon { width: 16px; height: 16px; margin-right: 20px; }
.omnibox {
  width: 1104px; height: 34px; border-radius: 17px; background: #282828; margin-left: -2px;
  display: flex; align-items: center; padding: 0 16px 0 5px; color: #eee;
}
.tunechip { width: 24px; height: 24px; border-radius: 50%; background: #444; display: flex; align-items: center; justify-content: center; }
.url { flex: 1; font-size: 14px; margin-left: 8px; }
.omniicon { width: 16px; height: 16px; margin-left: 16px; }
.exticon { width: 18px; height: 18px; margin-left: 18px; }
.ext-translate { margin-left: 17px; }
.tbsep { width: 1px; height: 22px; background: #666; margin: 0 10px 0 17px; }
.pill {
  height: 34px; border-radius: 17px; background: #004a77; color: #e3f0fa; font-size: 12px; letter-spacing: -.2px;
  display: flex; align-items: center;
}
.pill-verify { width: 119px; padding-left: 10px; gap: 7px; }
.pill-update { width: 109px; margin-left: 6px; padding-left: 11px; gap: 9px; }
.avatar { width: 18px; height: 18px; border-radius: 50%; background: #b3360f; font-size: 10px; color: #fff; display: flex; align-items: center; justify-content: center; box-shadow: 0 0 0 1.500px #004a77, 0 0 0 2.500px #7fa6c0; }

/* Bookmarks */
.bookmarks {
  height: 36px; background: #3c3c3c; flex: none; font-size: 12px; letter-spacing: -.2px; color: #dcdcdc;
  display: grid; align-items: center; border-bottom: 1px solid #444;
  grid-template-columns: 31px 15px 68px 85px 77px 103px 63px 153px 120px 121px 92px 81px 153px 266px 28px 18px 1fr;
  padding: 0 0 4px 12px;
}
.bm { display: flex; align-items: center; gap: 6px; white-space: nowrap; }
.bmicon { width: 14px; height: 14px; }
.bm-more { width: 12px; height: 12px; margin-left: 0; }
.bmsep { width: 1px; height: 20px; background: #666; }
.bmfav { width: 16px; height: 16px; }
.bm-all { margin-left: 0; gap: 8px; }

/* Workspace */
.workspace {
  height: 740px; flex: none; display: flex; background: #191c25;
  padding-bottom: 7px; font-family: "Inter", "DejaVu Sans", sans-serif;
}
.left { width: 462px; flex: none; display: flex; flex-direction: column; padding: 0 0 0 10px; }

.lhead { height: 40px; display: flex; align-items: center; flex: none; }
.rp-mark { width: 11px; height: 12px; margin-left: 6px; color: #fff; }
.chev { width: 8px; height: 5px; margin-left: 9px; }
.projicon { width: 16px; height: 16px; margin-left: 12px; border-radius: 4px; background: #2b2e38; display: flex; align-items: center; justify-content: center; }
.projname { margin-left: 6px; font-size: 13.500px; letter-spacing: -.2px; color: #f5f9fc; }
.stopbox { width: 12px; height: 12px; margin-left: 17px; border: 1.500px solid #6457c9; background: #a3a6b0; border-radius: 2px; }
.progress { width: 50px; height: 8px; margin-left: 15px; border-radius: 4px; background: #2b2e38; overflow: hidden; display: block; }
.progress-fill { display: block; width: 44%; height: 100%; background: #0b5cad; }
.upgrade {
  margin: -2px 0 0 11px; width: 80px; height: 28px; border-radius: 3px; background: #0053a6; color: #eaf3fb;
  font-size: 12.500px; font-weight: 500; display: flex; align-items: center; justify-content: center; gap: 5px;
}

.lsub { height: 38px; display: flex; align-items: center; flex: none; }
.lsub-hist { width: 16px; height: 16px; margin-left: 4px; }
.lsub-title { margin-left: 38px; font-size: 14px; width: 280px; white-space: nowrap; overflow: hidden; letter-spacing: -.35px; }
.agent { width: 60px; height: 24px; border-radius: 12px; background: #3c2813; color: #f2a65a; font-size: 12px; display: flex; align-items: center; justify-content: center; }
.lsub-new { width: 15px; height: 15px; margin-left: 25px; }

.messages { flex: none; height: 404px; padding: 0 0 0 5px; width: 430px; font-family: "DejaVu Sans", sans-serif; font-size: 10.800px; color: #f0f3f6; }
.scrollfade { width: 45px; height: 1px; margin-bottom: 23px; background: #3a3d47; }
.en { font-family: "Inter", sans-serif; font-size: 13px; }
.msg { line-height: 20px; }
.msg b, .list b { font-weight: 700; font-size: 9.600px; }
.msg b .en, .list b .en { font-size: 13px; }
.msg-small { display: flex; align-items: center; gap: 4px; padding-left: 4px; font-size: 10px; }
.msg-second { margin-top: 3px; }
.emoji { display: inline-block; width: 15px; height: 15px; vertical-align: -3px; }
.emoji-phone { width: 10px; }
.list { list-style: disc; padding-left: 18px; margin-top: 16px; }
.list li { height: 26.300px; line-height: 26.300px; white-space: nowrap; }
.msg-head { margin-top: 15px; }
.list-second { margin-top: 16px; }
.msg-para { margin-top: 12px; line-height: 24px; }

.card { background: #232630; border-radius: 8px; width: 442px; flex: none; }
.checkpoint { height: 94px; padding: 8px 8px; margin-top: 13px; margin-left: 0; }
.cp-top { height: 18px; display: flex; align-items: center; font-size: 12px; letter-spacing: -.2px; color: #c2c8cc; padding-left: 1px; }
.cp-check { width: 15px; height: 15px; margin-right: 6px; }
.cp-now { margin-left: 4px; }
.cp-title { height: 20px; line-height: 20px; margin-top: 6px; font-size: 13.500px; white-space: nowrap; letter-spacing: -.13px; }
.cp-actions { display: flex; gap: 8px; margin-top: 6px; }
.cp-btn { height: 28px; border-radius: 5px; background: #2a2d38; color: #c2c8cc; font-size: 12px; letter-spacing: -.1px; display: flex; align-items: center; justify-content: center; gap: 4px; }
.cp-btn svg { width: 12px; height: 12px; }
.cp-roll { width: 108px; }
.cp-chg { width: 80px; }
.cp-prev { width: 76px; }

.work { height: 34px; margin-top: 14px; display: flex; align-items: center; padding: 0 11px 1px 9px; font-size: 12px; letter-spacing: -.1px; color: #c2c8cc; }
.work-gauge { width: 15px; height: 11px; }
.work-text { flex: 1; margin-left: 8px; }
.work-chev { width: 10px; height: 6px; }

.composer { margin: 22px 0 0 -4px; width: 450px; height: 74px; border: 1px solid #3a3d47; border-radius: 6px; background: #232630; flex: none; padding: 0 6px; }
.placeholder { height: 36px; line-height: 36px; font-size: 13.500px; color: #8f949c; padding-left: 4px; }
.comp-row { display: flex; align-items: center; height: 24px; margin-top: 7px; }
.build { width: 80px; height: 24px; border-radius: 4px; background: #2a2d38; display: flex; align-items: center; padding-left: 6px; font-size: 12px; font-weight: 600; color: #e3e6e9; }
.build svg { width: 14px; height: 14px; }
.build span { margin-left: 6px; }
.build .build-chev { width: 8px; height: 5px; margin-left: 12px; }
.comp-icon { width: 14px; height: 14px; }
.comp-select { margin-left: 9px; }
.comp-clip { margin-left: 13px; }
.comp-sliders { margin-left: 255px; }
.comp-send { margin-left: 18px; }

/* Right pane */
.right { flex: 1; min-width: 0; display: flex; flex-direction: column; }
.rtabs { height: 41px; display: flex; align-items: center; flex: none; padding-top: 1px; }
.rtab { width: 160px; height: 28px; margin-right: 4px; border-radius: 4px; display: flex; align-items: center; padding: 0 10px 0 7px; font-size: 14px; color: #a8acb3; gap: 6px; }
.rtab > svg:first-child { width: 15px; height: 15px; }
.rtab span { flex: 1; }
.rtab-active { background: #232630; color: #f0f2f4; font-weight: 500; }
.rtabx { width: 9px; height: 9px; color: #6f747c; }
.rplus { width: 12px; height: 12px; margin-left: 8px; }
.ricon { width: 15px; height: 15px; }
.r-search { margin-left: 293px; }
.r-add { margin-left: 16px; width: 17px; }
.publish { width: 74px; height: 28px; margin-left: 9px; border-radius: 4px; background: #0053a6; color: #e3f0fa; font-size: 12.500px; font-weight: 500; display: flex; align-items: center; justify-content: center; gap: 5px; }
.publish svg { width: 10px; height: 13px; }
.r-split { margin-left: 12px; }

.frame { flex: 1; min-height: 0; margin-right: 6px; border: 1px solid #3a3d47; border-bottom: 0; border-radius: 5px 5px 0 0; display: flex; flex-direction: column; overflow: hidden; }
.framebar { height: 35px; flex: none; display: flex; align-items: center; padding-left: 9px; }
.fb-icon { width: 14px; height: 14px; margin-right: 14px; }
.fb-url { width: 880px; height: 24px; margin-left: -6px; border-radius: 4px; background: #232630; display: flex; align-items: center; padding-left: 4px; font-size: 13.500px; color: #f0f2f4; }
.fb-url svg { width: 13px; height: 13px; margin-right: 1px; }
.fb-host { color: #a8acb3; }
.fb-tool { width: 15px; height: 15px; }
.fb-devices { margin-left: 9px; }
.fb-palette { margin-left: 11px; }
.fb-theme { margin-left: 9px; font-size: 13.500px; color: #a8acb3; width: 48px; }
.fb-wrench { position: relative; width: 15px; height: 15px; margin-left: 8px; display: block; }
.fb-wrench svg { width: 15px; height: 15px; }
.fb-badge { position: absolute; left: 5px; top: -10px; width: 14px; height: 14px; border-radius: 50%; background: #f24a4a; color: #4a0a0a; font-size: 10px; line-height: 14px; text-align: center; }
.fb-open { margin-left: 10px; }

.viewport { flex: 1; min-height: 0; display: flex; }
.page {
  flex: 1; min-width: 0; position: relative; overflow: hidden;
  font-family: "Inter", sans-serif;
  background: linear-gradient(143deg, #9333ea 0%, #2563eb 56%, #4636cc 100%);
}
.blob { position: absolute; border-radius: 50%; background: rgba(255,255,255,.1); }
.blob-a { left: 39px; top: 80px; width: 64px; height: 64px; }
.blob-b { left: 979px; top: 604px; width: 96px; height: 96px; }

.sitenav { height: 65px; display: flex; align-items: center; padding: 0 77px 0 82px; border-bottom: 1px solid rgba(20,15,60,.75); position: relative; }
.sitelogo { display: flex; align-items: center; width: 317px; }
.logoicon { width: 32px; height: 36px; margin-top: -3px; }
.logotext { font-size: 20px; font-weight: 700; margin-left: 7px; color: transparent; background: linear-gradient(90deg, #2563eb, #9333ea); -webkit-background-clip: text; background-clip: text; }
.sitelinks { display: flex; gap: 32px; font-size: 15.800px; font-weight: 500; color: rgba(255,255,255,.5); }
.link-on { color: #fff; font-weight: 600; }
.siteauth { margin-left: auto; display: flex; align-items: center; gap: 32px; }
.login { font-size: 14px; font-weight: 600; color: #e9ecff; }
.getstarted { width: 109px; height: 40px; border-radius: 4px; background: #f7f7f7; color: #111; font-size: 14px; font-weight: 500; }

.hero { display: flex; flex-direction: column; align-items: center; padding-top: 79px; position: relative; }
.badge { height: 36px; width: 283px; border-radius: 18px; background: rgba(255,255,255,.2); display: flex; align-items: center; justify-content: center; gap: 5px; font-size: 14px; font-weight: 600; color: #fff; }
.badge-star { width: 16px; height: 16px; }
.headline { margin-top: 40px; font-size: 60px; line-height: 60px; font-weight: 700; text-align: center; color: #fff; display: flex; flex-direction: column; align-items: center; }
.hl-line { display: block; height: 60px; overflow: visible; }
.headline-accent { color: transparent; background: linear-gradient(90deg, #fcd34d, #fdba74); -webkit-background-clip: text; background-clip: text; height: 60px; padding-bottom: 12px; margin-bottom: -12px; box-sizing: content-box; }
.subtitle { margin-top: 24px; width: 720px; font-size: 24px; line-height: 32px; text-align: center; color: rgba(255,255,255,.88); }
.cta { display: flex; gap: 16px; margin: 32px 2px 0 0; }
.cta-start { width: 187px; height: 44px; border-radius: 4px; background: #fff; color: #9333ea; font-size: 14px; font-weight: 500; box-shadow: 0 10px 15px -3px rgba(0,0,0,.15); }
.cta-demo { width: 153px; height: 44px; border-radius: 4px; background: #0a0a0a; color: #fff; font-size: 14px; font-weight: 500; border: 2px solid #fff; }
.dashed { width: 894px; height: 200px; margin-top: 48px; border: 2px dashed rgba(255,255,255,.4); border-radius: 8px; flex: none; }

.scrollbar { width: 15px; flex: none; background: #fff; display: flex; flex-direction: column; align-items: center; padding-top: 5px; position: relative; }
.sb-up { width: 0; height: 0; border: 4px solid transparent; border-top: 0; border-bottom: 5px solid #8f8f8f; }
.sb-thumb { width: 9px; height: 193px; border-radius: 5px; background: #8f8f8f; margin-top: 8px; }
.sb-down { width: 0; height: 0; border: 4px solid transparent; border-bottom: 0; border-top: 5px solid #8f8f8f; margin-top: auto; margin-bottom: 5px; }

/* Taskbar */
.taskbar {
  height: 40px; flex: none; display: flex; align-items: center; position: relative;
  background: linear-gradient(90deg, #4a4a4a 0%, #4a4a4a 90%, #26344f 100%);
  font-family: "Noto Sans", "DejaVu Sans", sans-serif; color: #fff; font-size: 12px;
}
.tk-win { width: 17px; height: 17px; margin-left: 15px; }
.tk-search { width: 21px; height: 23px; margin-left: 29px; }
.tk-sep { width: 2px; height: 24px; background: #6a6a6a; margin-left: 21px; }
.tk-apps { display: flex; margin-left: 13px; }
.tk-app { width: 49px; height: 40px; display: flex; align-items: center; justify-content: center; position: relative; }
.tk-app svg { width: 26px; height: 26px; }
.tk-active { background: #6a6a6a; }
.tk-active::after, .tk-note::after { content: ""; position: absolute; left: 2px; right: 2px; bottom: 0; height: 2px; background: #76b9ed; }
.tk-y { fill: #fff; font-size: 10px; text-anchor: middle; }
.tk-q { fill: #fff; font-size: 15px; font-weight: 700; text-anchor: middle; }
.tk-tray { margin-left: auto; display: flex; align-items: center; height: 40px; padding-right: 21px; }
.tk-help { width: 24px; height: 24px; }
.tk-weather { position: relative; width: 24px; height: 24px; margin-left: 62px; }
.tk-weather svg { width: 24px; height: 24px; }
.tk-wbadge { position: absolute; right: -1px; top: -3px; width: 12px; height: 12px; border-radius: 50%; background: #c0262d; font-size: 8px; line-height: 12px; text-align: center; }
.tk-temp { margin-left: 8px; font-size: 13px; }
.tk-cond { margin-left: 8px; font-size: 14px; width: 60px; white-space: nowrap; }
.tk-chev { width: 12px; height: 7px; margin-left: 25px; }
.tk-wifi { width: 14px; height: 14px; margin-left: 12px; }
.tk-batt { width: 15px; height: 10px; margin-left: 8px; }
.tk-eng { margin-left: 10px; font-size: 12px; }
.tk-clock { display: flex; flex-direction: column; align-items: center; margin-left: 9px; line-height: 17px; font-size: 12px; letter-spacing: -.2px; }
.tk-notif { position: relative; width: 20px; height: 16px; margin-left: 18px; }
.tk-notif svg { width: 16px; height: 14px; }
.tk-count { position: absolute; left: 5px; top: 5px; width: 20px; height: 20px; border-radius: 50%; border: 1px solid #aaa; background: #3c3f48; text-align: center; line-height: 18px; font-size: 11px; }
```
